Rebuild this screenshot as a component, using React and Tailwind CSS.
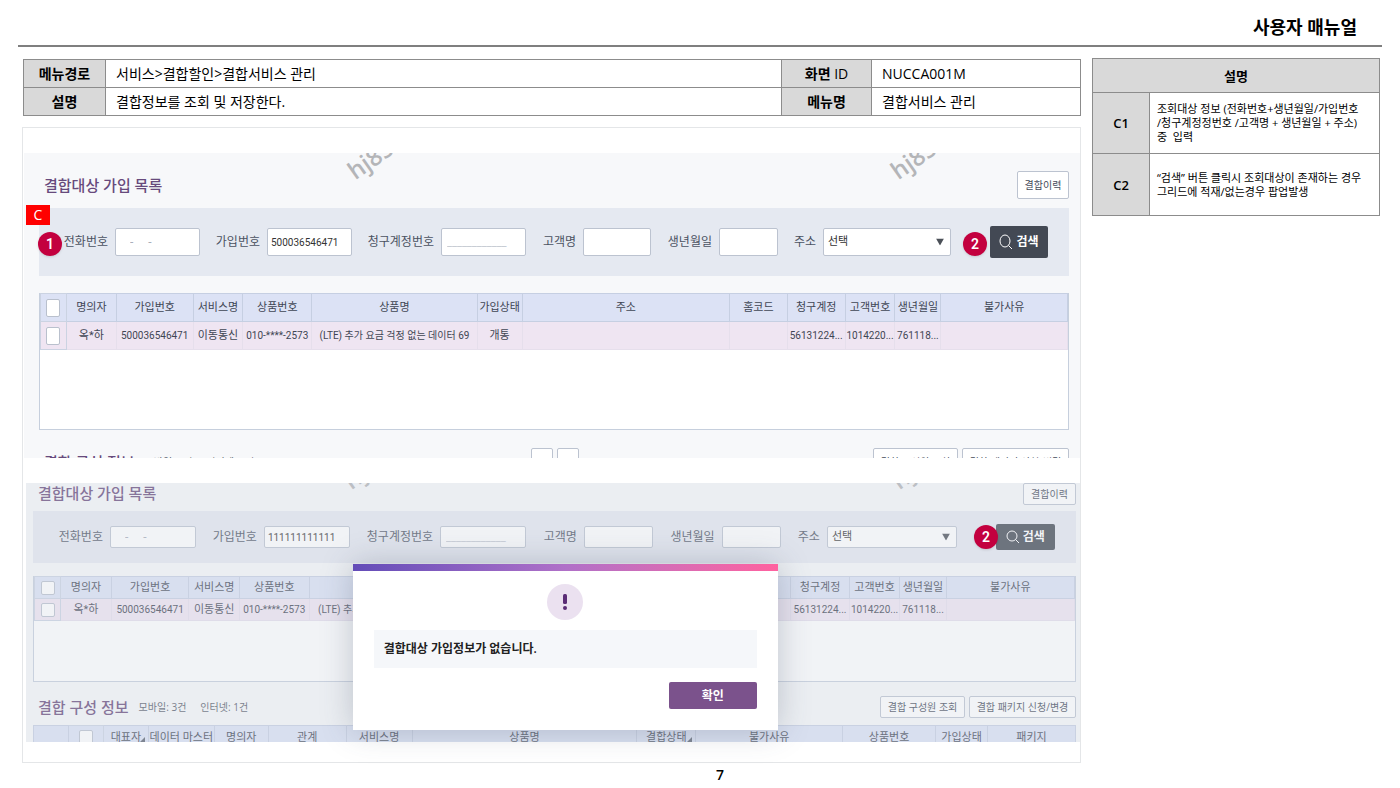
import { useId, useState } from 'react';
import clsx from 'clsx';

const TARGET_COLUMNS = [
  { label: '명의자', width: 50 },
  { label: '가입번호', width: 77 },
  { label: '서비스명', width: 50 },
  { label: '상품번호', width: 69 },
  { label: '상품명', width: 166 },
  { label: '가입상태', width: 45 },
  { label: '주소', width: 208 },
  { label: '홈코드', width: 58 },
  { label: '청구계정', width: 58 },
  { label: '고객번호', width: 50 },
  { label: '생년월일', width: 46 },
  { label: '불가사유', width: 127 },
];

const TARGET_ROW = [
  '옥*하',
  '500036546471',
  '이동통신',
  '010-****-2573',
  '(LTE) 추가 요금 걱정 없는 데이터 69',
  '개통',
  '',
  '',
  '56131224...',
  '1014220...',
  '761118...',
  '',
];

const MEMBER_COLUMNS = [
  { label: '대표자', width: 45, sortable: true },
  { label: '데이터 마스터', width: 66 },
  { label: '명의자', width: 54 },
  { label: '관계', width: 78 },
  { label: '서비스명', width: 66 },
  { label: '상품명', width: 225 },
  { label: '결합상태', width: 59, sortable: true },
  { label: '불가사유', width: 147 },
  { label: '상품번호', width: 93 },
  { label: '가입상태', width: 52 },
  { label: '패키지', width: 88 },
];

function Badge({ children, className }) {
  return (
    <span
      className={clsx(
        'z-20 flex size-6 shrink-0 items-center justify-center rounded-full bg-[#c3003f] text-sm font-semibold text-white shadow-sm',
        className
      )}
    >
      {children}
    </span>
  );
}

function Watermark({ className }) {
  return (
    <span
      aria-hidden="true"
      className={clsx(
        "pointer-events-none absolute origin-bottom-left -rotate-[35deg] font-['Open_Sans',sans-serif] text-2xl leading-6 font-semibold text-[#b4b5b8]",
        className
      )}
    >
      hj85
    </span>
  );
}

function SmallButton({ children, compact, className }) {
  return (
    <button
      type="button"
      className={clsx(
        'rounded-xs border border-[#bcc3d0] bg-white text-[10px] whitespace-nowrap text-[#444b5a]',
        compact ? 'h-[22px]' : 'h-7',
        className
      )}
    >
      {children}
    </button>
  );
}

function TextField({ label, value, compact, className }) {
  const id = useId();
  const [text, setText] = useState(value || '');

  return (
    <>
      <label htmlFor={id} className="pr-[7px] text-right whitespace-nowrap">
        {label}
      </label>
      <input
        id={id}
        value={text}
        onChange={(e) => setText(e.target.value)}
        className={clsx(
          'w-full min-w-0 rounded-xs border border-[#bcc3d0] bg-white',
          compact ? 'h-[22px]' : 'h-7',
          className || 'px-[3px] text-[10px] text-[#333]'
        )}
      />
    </>
  );
}

function SearchBar({ phone, joinNo, compact, marked }) {
  const addressId = useId();

  return (
    <form
      onSubmit={(e) => e.preventDefault()}
      className={clsx(
        "relative grid grid-cols-[76fr_85fr_67fr_85fr_89fr_85fr_57fr_68fr_68fr_59fr_45fr_128fr_39fr_58fr_21fr] items-center bg-[#e5e9f1] font-['Roboto','Noto_Sans_CJK_KR',sans-serif] text-xs text-[#4b5262]",
        compact ? 'h-[52px]' : 'h-[68px]'
      )}
    >
      {marked && (
        <>
          <span className="absolute -top-[3px] -left-[13px] flex h-5 w-6 items-center justify-center bg-[#ff0000] font-['Open_Sans',sans-serif] text-sm text-white">
            C
          </span>
          <Badge className="absolute top-6 -left-px">1</Badge>
        </>
      )}
      <TextField
        label="전화번호"
        value={phone}
        compact={compact}
        className="pl-[14px] text-xs whitespace-pre text-[#a9afba]"
      />
      <TextField label="가입번호" value={joinNo} compact={compact} />
      <TextField label="청구계정번호" value="____________" compact={compact} className="pl-[5px] text-[11px] text-[#c3c8d0]" />
      <TextField label="고객명" compact={compact} />
      <TextField label="생년월일" compact={compact} />
      <label htmlFor={addressId} className="pr-[7px] text-right whitespace-nowrap">
        주소
      </label>
      <div className="relative">
        <select
          id={addressId}
          className={clsx(
            'w-full appearance-none rounded-xs border border-[#bcc3d0] bg-white px-1 text-[11px] text-[#333]',
            compact ? 'h-[22px]' : 'h-7'
          )}
        >
          <option>선택</option>
        </select>
        <svg viewBox="0 0 8 7" className="pointer-events-none absolute top-1/2 right-[7px] h-[7px] w-2 -translate-y-1/2 fill-[#4b5058]">
          <path d="M0 0h8L4 7z" />
        </svg>
      </div>
      <div className={clsx('flex justify-end', compact ? '-mr-[2px]' : 'pt-1 pr-[3px]')}>
        <Badge>2</Badge>
      </div>
      <button
        type="submit"
        className={clsx(
          'flex items-center justify-center gap-[3px] rounded-xs bg-[#434954] font-bold whitespace-nowrap text-white',
          compact ? 'h-[26px]' : 'h-8'
        )}
      >
        <svg viewBox="0 0 14 16" className="h-4 w-[14px] fill-none stroke-white">
          <ellipse cx="6" cy="7" rx="5" ry={compact ? 5 : 6} />
          <path d={compact ? 'M9.5 10.5 13 14' : 'M9.5 11.5 13 15'} />
        </svg>
        검색
      </button>
    </form>
  );
}

function CheckCell({ as: Tag, label, compact }) {
  return (
    <Tag className="border border-[#cbd3e2] p-0">
      <input
        type="checkbox"
        aria-label={label}
        className={clsx(
          'mx-auto block w-[14px] appearance-none rounded-xs border border-[#b9c0cd] bg-white checked:bg-[#7a548f]',
          compact ? 'h-[14px]' : 'h-[18px]'
        )}
      />
    </Tag>
  );
}

function TargetGrid({ compact }) {
  const rowHeight = compact ? 'h-[22px]' : 'h-7';

  return (
    <div className={clsx('border border-[#c6cfdd] bg-white', compact ? 'h-[106px]' : 'h-[137px]')}>
      <table className="-mt-px w-full table-fixed border-collapse font-['Roboto','Noto_Sans_CJK_KR',sans-serif] text-[11px] leading-4 whitespace-nowrap text-[#3f4654]">
        <colgroup>
          <col style={{ width: `${(26 / 1030) * 100}%` }} />
          {TARGET_COLUMNS.map((c) => (
            <col key={c.label} style={{ width: `${(c.width / 1030) * 100}%` }} />
          ))}
        </colgroup>
        <thead>
          <tr className={clsx('bg-[#dce2f5]', rowHeight)}>
            <CheckCell as="th" label="전체 선택" compact={compact} />
            {TARGET_COLUMNS.map((c) => (
              <th key={c.label} className="border border-[#c6cfe2] p-0 font-normal">
                {c.label}
              </th>
            ))}
          </tr>
        </thead>
        <tbody>
          <tr className={clsx('bg-[#efe5f2]', rowHeight)}>
            <CheckCell as="td" label="행 선택" compact={compact} />
            {TARGET_ROW.map((text, i) => (
              <td
                key={TARGET_COLUMNS[i].label}
                className={clsx('border border-[#e6dfec] p-0 text-center', /\d/.test(text) && 'text-[10px]')}
              >
                {text}
              </td>
            ))}
          </tr>
        </tbody>
      </table>
    </div>
  );
}

function MemberGrid() {
  return (
    <table className="w-full table-fixed border-collapse text-[11px] leading-4 whitespace-nowrap text-[#3f4654]">
      <colgroup>
        <col style={{ width: `${(35 / 1043) * 100}%` }} />
        <col style={{ width: `${(35 / 1043) * 100}%` }} />
        {MEMBER_COLUMNS.map((c) => (
          <col key={c.label} style={{ width: `${(c.width / 1043) * 100}%` }} />
        ))}
      </colgroup>
      <thead>
        <tr className="h-[22px] bg-[#dce2f5]">
          <th className="border border-[#c6cfe2] p-0" />
          <CheckCell as="th" label="전체 선택" compact />
          {MEMBER_COLUMNS.map((c) => (
            <th key={c.label} className="relative border border-[#c6cfe2] p-0 font-normal">
              {c.label}
              {c.sortable && (
                <svg viewBox="0 0 5 5" className="absolute right-[3px] bottom-[5px] size-[5px] fill-[#5b6270]">
                  <path d="M5 0v5H0z" />
                </svg>
              )}
            </th>
          ))}
        </tr>
      </thead>
    </table>
  );
}

function SectionTitle({ children }) {
  return <h2 className="pl-[5px] text-[15px] leading-5 font-medium whitespace-nowrap text-[#674a7c]">{children}</h2>;
}

function MemberHeader({ compact }) {
  return (
    <div className={clsx('flex items-center', compact ? 'mt-[14px] h-[22px]' : 'mt-[18px] h-7')}>
      <SectionTitle>결합 구성 정보</SectionTitle>
      <p className="ml-[10px] flex gap-[14px] text-[10px] whitespace-nowrap text-[#555b68]">
        <span>모바일: 3건</span>
        <span>인터넷: 1건</span>
      </p>
      {!compact && (
        <div className="ml-[277px] flex gap-1">
          <SmallButton className="w-[22px]" />
          <SmallButton className="w-[22px]" />
        </div>
      )}
      <div className="ml-auto flex gap-1">
        <SmallButton compact={compact} className="w-[85px]">
          결합 구성원 조회
        </SmallButton>
        <SmallButton compact={compact} className="w-[107px]">
          결합 패키지 신청/변경
        </SmallButton>
      </div>
    </div>
  );
}

function AlertDialog() {
  return (
    <div
      role="alertdialog"
      aria-label="알림"
      className="absolute top-[81px] left-[31%] z-30 flex h-[166px] w-[425px] flex-col bg-white shadow-[0_0_30px_rgba(70,80,100,0.28)]"
    >
      <div className="h-[7px] shrink-0 bg-linear-to-r from-[#634cb8] via-[#b070c8] to-[#ff619f]" />
      <div className="flex flex-col px-[21px] pt-[13px]">
        <span className="flex size-9 items-center justify-center self-center rounded-full bg-[#ebe1f0]">
          <svg viewBox="0 0 6 16" className="h-4 w-[6px] fill-[#5b2d76]">
            <rect x="1" y="0" width="4" height="10" rx="1.5" />
            <circle cx="3" cy="14" r="2" />
          </svg>
        </span>
        <p className="mt-[10px] flex h-[38px] items-center bg-[#f5f7fa] px-[10px] text-xs font-semibold text-[#222]">
          결합대상 가입정보가 없습니다.
        </p>
        <button type="button" className="mt-[14px] h-[27px] w-[88px] self-end rounded-xs bg-[#7b528c] text-xs font-semibold text-white">
          확인
        </button>
      </div>
    </div>
  );
}

function MenuInfo() {
  const head = 'border border-[#8c8c8c] bg-[#d9d9d9] p-0 text-center font-bold';
  const cell = 'border border-[#8c8c8c] p-0 pl-[10px]';

  return (
    <table className="mt-px w-full table-fixed border-collapse text-sm leading-5 whitespace-nowrap">
      <colgroup>
        <col className="w-[82px]" />
        <col />
        <col className="w-[90px]" />
        <col className="w-[209px]" />
      </colgroup>
      <tbody>
        <tr className="h-7">
          <th className={head}>메뉴경로</th>
          <td className={cell}>서비스&gt;결합할인&gt;결합서비스 관리</td>
          <th className={head}>
            화면 <span className="font-normal">ID</span>
          </th>
          <td className={cell}>NUCCA001M</td>
        </tr>
        <tr className="h-7">
          <th className={head}>설명</th>
          <td className={cell}>결합정보를 조회 및 저장한다.</td>
          <th className={head}>메뉴명</th>
          <td className={cell}>결합서비스 관리</td>
        </tr>
      </tbody>
    </table>
  );
}

function Notes() {
  return (
    <table className="w-full table-fixed border-collapse text-[11px] leading-[14px] whitespace-nowrap">
      <colgroup>
        <col className="w-[57px]" />
        <col />
      </colgroup>
      <thead>
        <tr className="h-[34px]">
          <th colSpan={2} className="border border-[#8c8c8c] bg-[#d9d9d9] p-0 text-[13px] font-semibold">
            설명
          </th>
        </tr>
      </thead>
      <tbody>
        <tr className="h-[61px]">
          <th className="border border-[#8c8c8c] bg-[#d9d9d9] p-0 text-[13px] font-semibold">C1</th>
          <td className="border border-[#8c8c8c] p-0 pl-[7px]">
            조회대상 정보 (전화번호+생년월일/가입번호
            <br />
            /청구계정정번호 /고객명 + 생년월일 + 주소)
            <br />
            중&nbsp; 입력
          </td>
        </tr>
        <tr className="h-[62px]">
          <th className="border border-[#8c8c8c] bg-[#d9d9d9] p-0 text-[13px] font-semibold">C2</th>
          <td className="border border-[#8c8c8c] p-0 pl-[7px]">
            “검색” 버튼 클릭시 조회대상이 존재하는 경우
            <br />
            그리드에 적재/없는경우 팝업발생
          </td>
        </tr>
      </tbody>
    </table>
  );
}

export default function App() {
  return (
    <div className="bg-white font-['Open_Sans','Noto_Sans_CJK_KR',sans-serif] text-black">
      <header className="mx-[18px] flex h-[47px] items-center justify-end border-b-2 border-[#7f7f7f] pt-2 pr-[25px]">
        <h1 className="text-lg leading-6 font-semibold">사용자 매뉴얼</h1>
      </header>

      <div className="grid grid-cols-[minmax(0,1058fr)_minmax(0,288fr)] items-start gap-[11px] pt-[11px] pr-5 pl-[23px]">
        <main>
          <MenuInfo />

          <div className="mt-[11px] -ml-px border border-[#e4e6e8] pt-[25px] pb-5">
            <section className="relative ml-px h-[305px] overflow-hidden bg-[#f7f8fa] pr-[11px] pl-[15px]">
              <Watermark className="top-[6px] left-[31.5%]" />
              <Watermark className="top-[6px] left-[83%]" />
              <div className="flex items-center justify-between pt-[18px] pb-[9px]">
                <SectionTitle>결합대상 가입 목록</SectionTitle>
                <SmallButton className="w-[52px]">결합이력</SmallButton>
              </div>
              <SearchBar phone="-     -" joinNo="500036546471" marked />
              <div className="mt-[17px]">
                <TargetGrid />
              </div>
              <MemberHeader />
            </section>

            <section className="relative mt-[25px] ml-[3px] h-[259px]">
              <div className="relative h-full">
                <div className="relative h-full overflow-hidden bg-[#f7f8fa] pr-1 pl-[7px]">
                  <Watermark className="-top-[14px] left-[31%]" />
                  <Watermark className="-top-[14px] left-[83%]" />
                  <div className="flex h-7 items-start justify-between">
                    <SectionTitle>결합대상 가입 목록</SectionTitle>
                    <SmallButton compact className="w-[53px]">
                      결합이력
                    </SmallButton>
                  </div>
                  <SearchBar phone="-     -" joinNo="111111111111" compact />
                  <div className="mt-[13px]">
                    <TargetGrid compact />
                  </div>
                  <MemberHeader compact />
                  <div className="mt-[7px]">
                    <MemberGrid />
                  </div>
                </div>
                <div className="pointer-events-none absolute inset-0 z-10 bg-[#d2d8e0]/30" />
              </div>
              <AlertDialog />
            </section>
          </div>
        </main>

        <aside>
          <Notes />
        </aside>
      </div>

      <footer className="pl-10 text-center text-sm leading-6 font-semibold">7</footer>
    </div>
  );
}
